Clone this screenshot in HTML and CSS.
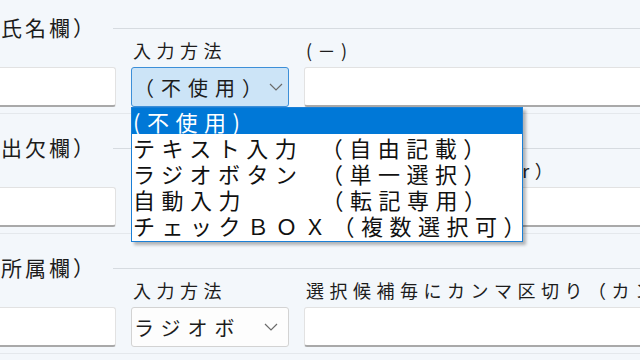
FILE: index.html
```html
<!DOCTYPE html>
<html>
	<head>
		<meta charset="utf-8">
		<title>項目設定</title>
		<link rel="stylesheet" href="styles.css">
	</head>
	<body>
		<div class="page">
			<section class="block">
				<div class="head"><span class="title">（氏名欄）</span><span class="rule"></span></div>
				<div class="fields">
					<div class="field"><div class="cap"></div><div class="box"></div></div>
					<div class="field">
						<div class="cap">入力方法</div>
						<div class="pick open">
							<span class="pick-text">（不使用）</span>
							<svg class="chev" width="14" height="8" viewBox="0 0 14 8"><polyline points="1,1 7,7 13,1" fill="none" stroke="#6b6b6b" stroke-width="1.2"/></svg>
							<ul class="menu">
								<li class="on">(不使用)</li>
								<li>テキスト入力　（自由記載）</li>
								<li>ラジオボタン　（単一選択）</li>
								<li>自動入力　　　（転記専用）</li>
								<li>チェックＢＯＸ（複数選択可）</li>
							</ul>
						</div>
					</div>
					<div class="field"><div class="cap">(－)</div><div class="box"></div></div>
				</div>
			</section>

			<section class="block">
				<div class="head"><span class="title">（出欠欄）</span><span class="rule"></span></div>
				<div class="fields">
					<div class="field"><div class="cap"></div><div class="box"></div></div>
					<div class="field">
						<div class="cap">入力方法</div>
						<div class="pick">
							<span class="pick-text cut">テキスト入力</span>
							<svg class="chev" width="14" height="8" viewBox="0 0 14 8"><polyline points="1,1 7,7 13,1" fill="none" stroke="#6b6b6b" stroke-width="1.2"/></svg>
						</div>
					</div>
					<div class="field"><div class="cap">文字数（例 Number）</div><div class="box"></div></div>
				</div>
			</section>

			<section class="block">
				<div class="head"><span class="title">（所属欄）</span><span class="rule"></span></div>
				<div class="fields">
					<div class="field"><div class="cap"></div><div class="box"></div></div>
					<div class="field">
						<div class="cap">入力方法</div>
						<div class="pick">
							<span class="pick-text cut">ラジオボタン</span>
							<svg class="chev" width="14" height="8" viewBox="0 0 14 8"><polyline points="1,1 7,7 13,1" fill="none" stroke="#6b6b6b" stroke-width="1.2"/></svg>
						</div>
					</div>
					<div class="field"><div class="cap">選択候補毎にカンマ区切り（カンマは半角）</div><div class="box"></div></div>
				</div>
			</section>
		</div>
	</body>
</html>
```

FILE: styles.css
```css
*
	{
		box-sizing: border-box;
	}
body
	{
		margin: 0;
		background-color: #f3f7fb;
		color: #1c1c1c;
		font-family: "Noto Sans CJK JP", sans-serif;
		overflow: hidden;
		width: 640px;
		height: 360px;
	}
.page
	{
		width: 700px;
		margin-left: -23px;
	}
.block
	{
		height: 120px;
		padding-top: 14px;
	}
.head
	{
		display: flex;
		align-items: center;
		height: 26px;
	}
.title
	{
		font-size: 21px;
		letter-spacing: 3px;
		line-height: 26px;
		white-space: nowrap;
	}
.rule
	{
		flex: 1;
		margin-left: 16px;
		margin-top: 3px;
		border-top: 1px solid #d6dbe0;
	}
.fields
	{
		display: grid;
		grid-template-columns: 139px 158px 1fr;
		column-gap: 15px;
		padding-bottom: 6px;
		border-bottom: 1px solid #e4e8ec;
	}
.cap
	{
		height: 27px;
		font-size: 18px;
		line-height: 20px;
		letter-spacing: 5.5px;
		padding-left: 2px;
		white-space: nowrap;
		overflow: hidden;
	}
.box
	{
		height: 40px;
		background-color: #ffffff;
		border: 1px solid #e2e2e2;
		border-bottom: 2px solid #a9a9a9;
		border-radius: 3px;
	}
.pick
	{
		position: relative;
		display: flex;
		align-items: center;
		justify-content: space-between;
		height: 40px;
		padding: 0 10px 0 2px;
		background-color: #fdfdfd;
		border: 1px solid #d3d3d3;
		border-radius: 3px;
		font-size: 20px;
		letter-spacing: 7px;
	}
.pick.open
	{
		background-color: #cce4f7;
		border-color: #3c8fd8;
	}
.pick-text
	{
		white-space: nowrap;
	}
.pick-text.cut
	{
		width: 105px;
		overflow: hidden;
	}
.chev
	{
		flex: none;
	}
.menu
	{
		position: absolute;
		z-index: 10;
		top: 39px;
		left: -1px;
		width: 392px;
		margin: 0;
		padding: 0 0 3px 0;
		list-style: none;
		background-color: #ffffff;
		border: 1px solid #1a7fd6;
		box-shadow: 3px 3px 3px rgba(0, 0, 0, 0.28);
		font-size: 22px;
		letter-spacing: 6.5px;
		color: #111111;
	}
.menu li
	{
		height: 26px;
		line-height: 26px;
		padding-left: 1px;
		white-space: pre;
		overflow: hidden;
	}
.menu li.on
	{
		background-color: #0078d7;
		color: #ffffff;
	}
```
